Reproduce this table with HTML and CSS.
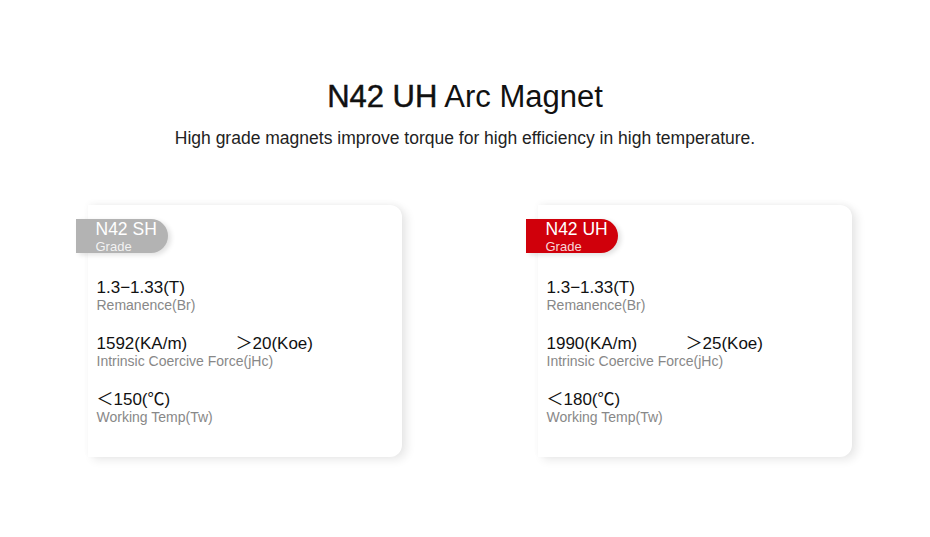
FILE: index.html
```html
<!DOCTYPE html>
<html>
<head>
<meta charset="utf-8">
<link rel="stylesheet" href="styles.css">
</head>
<body>
<div class="page">
  <header class="head">
    <h1 class="title"><span class="strong">N42 UH</span> Arc Magnet</h1>
    <p class="sub">High grade magnets improve torque for high efficiency in high temperature.</p>
  </header>
  <section class="cards">
    <div class="card">
      <div class="badge badge-grey">
        <span class="b-name">N42 SH</span>
        <span class="b-label">Grade</span>
      </div>
      <div class="rows">
        <div class="row">
          <div class="val">1.3−1.33(T)</div>
          <div class="lbl">Remanence(Br)</div>
        </div>
        <div class="row">
          <div class="val"><span class="v1">1592(KA/m)</span><span>＞20(Koe)</span></div>
          <div class="lbl">Intrinsic Coercive Force(jHc)</div>
        </div>
        <div class="row">
          <div class="val">＜150(℃)</div>
          <div class="lbl">Working Temp(Tw)</div>
        </div>
      </div>
    </div>
    <div class="card">
      <div class="badge badge-red">
        <span class="b-name">N42 UH</span>
        <span class="b-label">Grade</span>
      </div>
      <div class="rows">
        <div class="row">
          <div class="val">1.3−1.33(T)</div>
          <div class="lbl">Remanence(Br)</div>
        </div>
        <div class="row">
          <div class="val"><span class="v1">1990(KA/m)</span><span>＞25(Koe)</span></div>
          <div class="lbl">Intrinsic Coercive Force(jHc)</div>
        </div>
        <div class="row">
          <div class="val">＜180(℃)</div>
          <div class="lbl">Working Temp(Tw)</div>
        </div>
      </div>
    </div>
  </section>
</div>
</body>
</html>
```

FILE: styles.css
```css
html, body {
  margin: 0;
  padding: 0;
  background: #ffffff;
}
body {
  font-family: "Liberation Sans", Arial, "Noto Sans CJK SC", sans-serif;
  color: #111;
  width: 930px;
  height: 537px;
  overflow: hidden;
}
.page {
  display: flex;
  flex-direction: column;
  align-items: center;
}
.head {
  padding-top: 79px;
  display: flex;
  flex-direction: column;
  align-items: center;
}
.title {
  margin: 0;
  font-size: 31px;
  line-height: 36px;
  font-weight: normal;
  color: #111;
}
.title .strong {
  -webkit-text-stroke: 0.45px #111;
}
.sub {
  margin: 13px 0 0;
  font-size: 17.5px;
  line-height: 20px;
  color: #222;
}
.cards {
  margin-top: 57px;
  display: flex;
  gap: 136px;
  padding-left: 9px;
}
.card {
  position: relative;
  width: 314px;
  height: 252px;
  background: #fff;
  border-radius: 0 12px 12px 0;
  box-shadow: 5px 3px 10px rgba(0,0,0,0.09), 0 -2px 6px rgba(0,0,0,0.035);
}
.badge {
  position: absolute;
  left: -12px;
  top: 14px;
  width: 92px;
  height: 34px;
  border-radius: 0 17px 17px 0;
  box-sizing: border-box;
  padding-left: 20px;
  padding-top: 1px;
  display: flex;
  flex-direction: column;
  color: #fff;
  box-shadow: 3px 2px 5px rgba(0,0,0,0.12);
}
.badge-grey { background: #b3b3b3; }
.badge-red { background: #d0000b; }
.b-name {
  font-size: 17.5px;
  line-height: 19px;
}
.b-label {
  font-size: 13px;
  line-height: 15px;
  color: rgba(255,255,255,0.85);
}
.rows {
  padding: 73px 0 0 9px;
  display: flex;
  flex-direction: column;
  gap: 21px;
}
.row {
  display: flex;
  flex-direction: column;
}
.val {
  font-size: 17px;
  line-height: 19px;
  color: #111;
  display: flex;
}
.val .v1 {
  width: 139px;
}
.lbl {
  font-size: 14px;
  line-height: 16px;
  color: #888;
}
```
